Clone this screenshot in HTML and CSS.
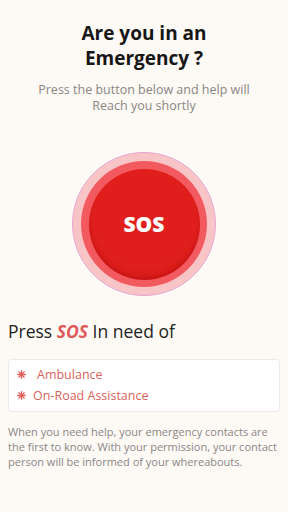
FILE: index.html
```html
<!DOCTYPE html>
<html lang="en">
<head>
  <meta charset="UTF-8">
  <meta name="viewport" content="width=device-width, initial-scale=1.0">
  <title>SOS</title>
  <link rel="stylesheet" href="styles.css">
</head>
<body>
<div class="screen">
  <h1 class="title">Are you in an<br>Emergency ?</h1>
  <p class="subtitle">Press the button below and help will<br>Reach you shortly</p>

  <div class="sos-wrap">
    <div class="sos-outer">
      <div class="sos-mid">
        <button class="sos-btn">SOS</button>
      </div>
    </div>
  </div>

  <h2 class="need-title">Press <em>SOS</em> In need of</h2>

  <div class="need-box">
    <div class="need-item need-item-first">
      <svg class="star" viewBox="0 0 10 10" width="9" height="9"><g stroke="#e0605a" stroke-width="1.4" stroke-linecap="round"><line x1="5" y1="0.8" x2="5" y2="9.2"/><line x1="0.8" y1="5" x2="9.2" y2="5"/><line x1="2" y1="2" x2="8" y2="8"/><line x1="8" y1="2" x2="2" y2="8"/></g></svg>
      <span>Ambulance</span>
    </div>
    <div class="need-item">
      <svg class="star" viewBox="0 0 10 10" width="9" height="9"><g stroke="#e0605a" stroke-width="1.4" stroke-linecap="round"><line x1="5" y1="0.8" x2="5" y2="9.2"/><line x1="0.8" y1="5" x2="9.2" y2="5"/><line x1="2" y1="2" x2="8" y2="8"/><line x1="8" y1="2" x2="2" y2="8"/></g></svg>
      <span>On-Road Assistance</span>
    </div>
  </div>

  <p class="note">When you need help, your emergency contacts are the first to know. With your permission, your contact person will be informed of your whereabouts.</p>
</div>
</body>
</html>
```

FILE: styles.css
```css
* {
  margin: 0;
  padding: 0;
  box-sizing: border-box;
}

body {
  font-family: 'Open Sans', 'Noto Sans', sans-serif;
  background: #fdf9f5;
  color: #222;
}

.screen {
  width: 288px;
  height: 512px;
  padding: 21px 8px 0;
  overflow: hidden;
}

.title {
  text-align: center;
  font-size: 19px;
  font-weight: 700;
  line-height: 25px;
  color: #161616;
}

.subtitle {
  margin-top: 11px;
  text-align: center;
  font-size: 12.5px;
  line-height: 16px;
  color: #8a8785;
}

.sos-wrap {
  display: flex;
  justify-content: center;
  margin-top: 38px;
}

.sos-outer {
  width: 144px;
  height: 144px;
  border-radius: 50%;
  background: #f8c4c6;
  border: 1px solid #e7a8d6;
  display: flex;
  align-items: center;
  justify-content: center;
}

.sos-mid {
  width: 126px;
  height: 126px;
  border-radius: 50%;
  background: #f25a60;
  display: flex;
  align-items: center;
  justify-content: center;
}

.sos-btn {
  width: 111px;
  height: 111px;
  border-radius: 50%;
  border: none;
  background: radial-gradient(circle at 50% 40%, #e01f1c 60%, #cf1515 100%);
  box-shadow: inset 0 -3px 4px rgba(150, 0, 0, 0.25);
  color: #fff;
  font-family: 'Open Sans', 'Noto Sans', sans-serif;
  font-size: 21px;
  font-weight: 800;
}

.need-title {
  margin-top: 23px;
  font-size: 17.5px;
  font-weight: 400;
  color: #222;
}

.need-title em {
  color: #e05a5a;
  font-weight: 700;
  font-style: italic;
}

.need-box {
  margin-top: 16px;
  background: #fff;
  border: 1px solid #efe9e4;
  border-radius: 4px;
  padding: 4px 6px 5px;
}

.need-item {
  display: flex;
  align-items: center;
  gap: 7px;
  height: 21px;
  font-size: 12.5px;
  color: #d9645d;
}

.need-item-first {
  gap: 11px;
}

.star {
  margin-left: 2px;
  flex-shrink: 0;
}

.note {
  margin-top: 12px;
  font-size: 11px;
  line-height: 15px;
  color: #8a8785;
}
```
